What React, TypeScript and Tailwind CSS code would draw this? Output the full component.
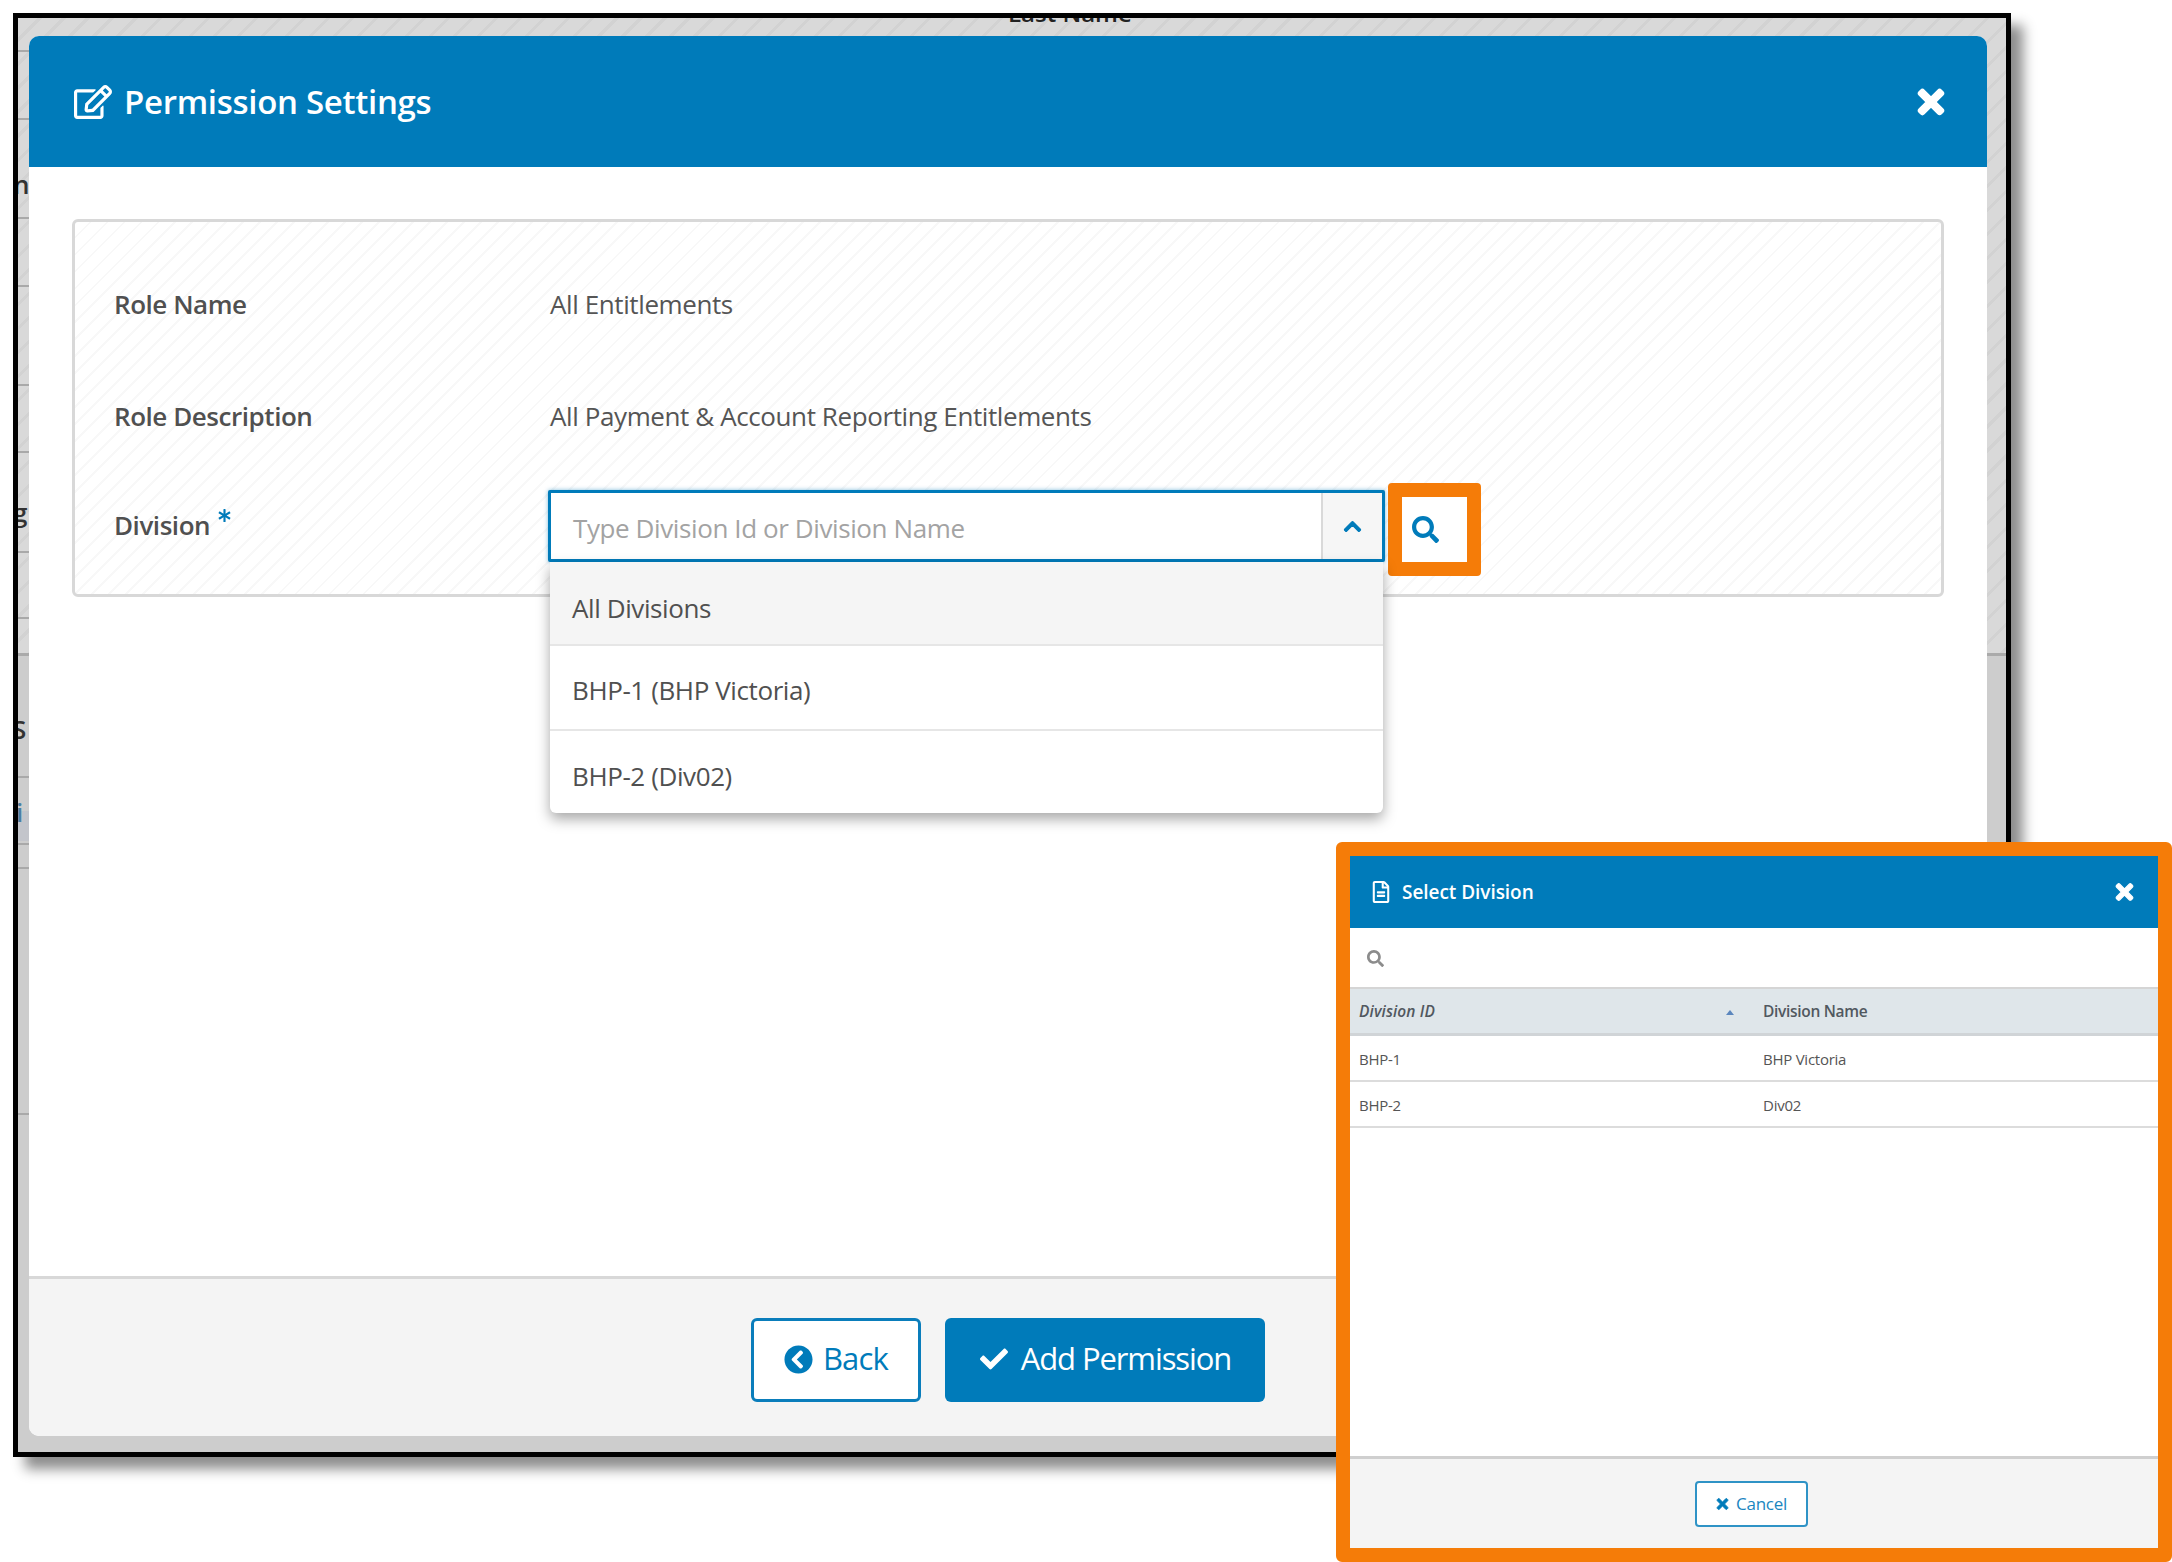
import React from "react";
import { FaRegEdit, FaTimes, FaSearch, FaChevronUp, FaRegFileAlt, FaChevronCircleLeft, FaCheck, FaAsterisk } from "react-icons/fa";

const stripeLines = [50, 118, 217, 285, 384, 451, 551, 617, 653, 776, 843, 867, 1113];
const font = "font-['Open_Sans','Noto_Sans',sans-serif]";

function Row({ label, value }: { label: string; value: string }) {
  return (
    <div className="flex h-[112px] items-center pb-[2px] pl-[39px]">
      <div className="w-[436px] text-[26px] font-semibold tracking-[-0.45px] text-[#505050]">{label}</div>
      <div className="text-[26px] tracking-[-0.4px] text-[#555]">{value}</div>
    </div>
  );
}

export default function App() {
  return (
    <div className={`relative h-[1562px] w-[2172px] overflow-hidden bg-white pl-[13px] pt-[13px] ${font}`}>
      <div className="relative flex h-[1444px] w-[1998px] border-[5px] border-black bg-[#cdcdcd] pb-[16px] pl-[11px] pr-[19px] pt-[18px] shadow-[12px_12px_12px_rgba(0,0,0,0.45)]">
        {/* dimmed page behind the dialog */}
        <div className="absolute left-0 right-0 top-0 h-[635px] bg-[repeating-linear-gradient(135deg,#d9d9d9_0px,#d9d9d9_14px,#d2d2d2_14px,#d2d2d2_17px)]" />
        {stripeLines.map((y) => (
          <div key={y} className="absolute left-0 h-[2px] w-[11px] bg-[#a9a9a9]" style={{ top: y - 18 }} />
        ))}
        <div className="absolute left-0 right-0 top-[635px] h-[3px] bg-[#aaa]" />
        <div className="absolute left-0 top-[793px] h-[30px] w-[11px] bg-[#c3c5cb]" />
        <div className="absolute left-[990px] top-0 h-[18px] overflow-hidden">
          <div className="mt-[-22px] text-[24px] font-semibold leading-[34px] text-[#222]">Last Name</div>
        </div>
        <div className="absolute left-0 top-[148px] w-[11px] overflow-hidden text-[26px] font-semibold leading-[36px] text-[#333]"><span className="ml-[-5px]">n</span></div>
        <div className="absolute left-0 top-[476px] w-[11px] overflow-hidden text-[26px] font-semibold leading-[36px] text-[#333]"><span className="ml-[-5px]">g</span></div>
        <div className="absolute left-0 top-[693px] w-[11px] overflow-hidden text-[26px] font-semibold leading-[36px] text-[#333]"><span className="ml-[-6px]">S</span></div>
        <div className="absolute left-0 top-[776px] w-[11px] overflow-hidden text-[26px] font-semibold leading-[36px] text-[#4a7fa3]"><span className="ml-[-2px]">i</span></div>

        {/* Permission Settings dialog */}
        <div className="relative flex flex-1 flex-col overflow-hidden rounded-[10px] bg-white">
          <div className="flex h-[131px] items-center justify-between bg-[#007bba] pl-[44px] pr-[41px] text-white">
            <div className="flex items-center gap-[12px]">
              <FaRegEdit className="ml-[1px] h-[34px] w-[38px]" />
              <span className="text-[33px] font-semibold tracking-[-0.3px]">Permission Settings</span>
            </div>
            <FaTimes className="h-[36px] w-[30px] stroke-[24]" />
          </div>
          <div className="flex-1 px-[43px] pt-[52px]">
            <div className="h-[378px] rounded-[6px] border-[3px] border-[#d8d8d8] bg-[repeating-linear-gradient(135deg,#ffffff_0px,#ffffff_10px,#f8f8f8_10px,#f8f8f8_12px)] pt-[27px]">
              <Row label="Role Name" value="All Entitlements" />
              <Row label="Role Description" value="All Payment & Account Reporting Entitlements" />
              <div className="flex items-start pl-[39px] pt-[10px]">
                <div className="mt-[23px] flex w-[434px] items-start text-[26px] font-semibold tracking-[-0.45px] text-[#505050]">
                  Division
                  <FaAsterisk className="ml-[8px] mt-[3px] h-[13px] w-[13px] text-[#007bba]" />
                </div>
                <div className="relative mt-[7px] flex h-[72px] w-[837px] rounded-[2px] border-[3px] border-[#007bba] bg-white shadow-[0_0_4px_rgba(0,123,186,0.5)]">
                  <div className="flex flex-1 items-center pl-[22px] pt-[4px] text-[26px] tracking-[-0.4px] text-[#a3a3a3]">Type Division Id or Division Name</div>
                  <div className="flex w-[61px] items-center justify-center border-l-2 border-[#d9d9d9] bg-[#f6f6f6] text-[#007bba]">
                    <FaChevronUp className="h-[19px] w-[19px] stroke-[30]" />
                  </div>
                  <div className="absolute left-[-1px] top-[69px] z-10 w-[833px] rounded-b-[6px] bg-white text-[26px] tracking-[-0.4px] text-[#505050] shadow-[0_6px_14px_rgba(0,0,0,0.35)]">
                    <div className="flex h-[84px] items-center border-b-2 border-[#e6e6e6] bg-[#f5f5f5] pl-[22px] pt-[10px]">All Divisions</div>
                    <div className="flex h-[85px] items-center border-b-2 border-[#e6e6e6] pl-[22px] pt-[6px]">BHP-1 (BHP Victoria)</div>
                    <div className="flex h-[82px] items-center pl-[22px] pt-[8px]">BHP-2 (Div02)</div>
                  </div>
                </div>
                <div className="ml-[3px] flex h-[93px] w-[93px] items-center rounded-[4px] border-[14px] border-[#f57c08] bg-white pl-[10px] text-[#007bba]">
                  <FaSearch className="h-[27px] w-[27px]" />
                </div>
              </div>
            </div>
          </div>
          <div className="flex h-[160px] gap-[24px] border-t-[3px] border-[#d8d8d8] bg-[#f4f4f4] pl-[722px] pt-[39px]">
            <div className="flex h-[84px] w-[170px] items-center justify-center gap-[10px] rounded-[6px] border-[3px] border-[#0a7dbb] bg-white pb-[4px] text-[31px] tracking-[-0.8px] text-[#007bba]">
              <FaChevronCircleLeft className="mt-[2px] h-[29px] w-[29px]" />
              Back
            </div>
            <div className="flex h-[84px] w-[320px] items-center justify-center gap-[12px] rounded-[6px] bg-[#007bba] pb-[4px] text-[31px] font-medium tracking-[-1.1px] text-white">
              <FaCheck className="mt-[2px] h-[28px] w-[30px]" />
              Add Permission
            </div>
          </div>
        </div>
      </div>

      {/* Select Division inset */}
      <div className="absolute left-[1336px] top-[842px] flex h-[720px] w-[836px] flex-col rounded-[6px] border-[14px] border-[#f57c08] bg-white text-[#555]">
        <div className="flex h-[72px] items-center justify-between bg-[#007bba] pl-[22px] pr-[24px] text-white">
          <div className="flex items-center gap-[12px]">
            <FaRegFileAlt className="h-[22px] w-[18px]" />
            <span className="text-[19px] font-semibold tracking-[-0.05px]">Select Division</span>
          </div>
          <FaTimes className="h-[24px] w-[19px] stroke-[24]" />
        </div>
        <div className="flex h-[61px] items-center border-b-2 border-[#d5d5d5] pl-[17px] pt-[2px] text-[#8c8c8c]">
          <FaSearch className="h-[17px] w-[17px]" />
        </div>
        <div className="flex h-[47px] items-center border-b-[3px] border-[#d0d4d7] bg-[#dfe6ea] pt-[2px] text-[15.5px] font-semibold tracking-[-0.3px] text-[#51585f]">
          <div className="flex w-[413px] items-center justify-between pl-[9px] pr-[29px] italic tracking-[0.1px]">
            Division ID
            <span className="h-0 w-0 border-x-[4px] border-b-[5px] border-x-transparent border-b-[#5b86bd]" />
          </div>
          <div>Division Name</div>
        </div>
        {[["BHP-1", "BHP Victoria"], ["BHP-2", "Div02"]].map(([id, name]) => (
          <div key={id} className="flex h-[46px] items-center border-b-2 border-[#dcdcdc] pt-[2px] text-[15px] tracking-[-0.25px] text-[#555]">
            <div className="w-[413px] pl-[9px]">{id}</div>
            <div>{name}</div>
          </div>
        ))}
        <div className="flex-1" />
        <div className="flex h-[92px] items-center justify-center border-t-[3px] border-[#cfcfcf] bg-[#f4f4f4] pr-[5px]">
          <div className="flex h-[46px] w-[113px] items-center justify-center gap-[7px] rounded-[4px] border-2 border-[#2f93c6] bg-white text-[17px] tracking-[-0.3px] text-[#1a86bf]">
            <FaTimes className="h-[16px] w-[13px] stroke-[24] text-[#007bba]" />
            Cancel
          </div>
        </div>
      </div>
    </div>
  );
}
